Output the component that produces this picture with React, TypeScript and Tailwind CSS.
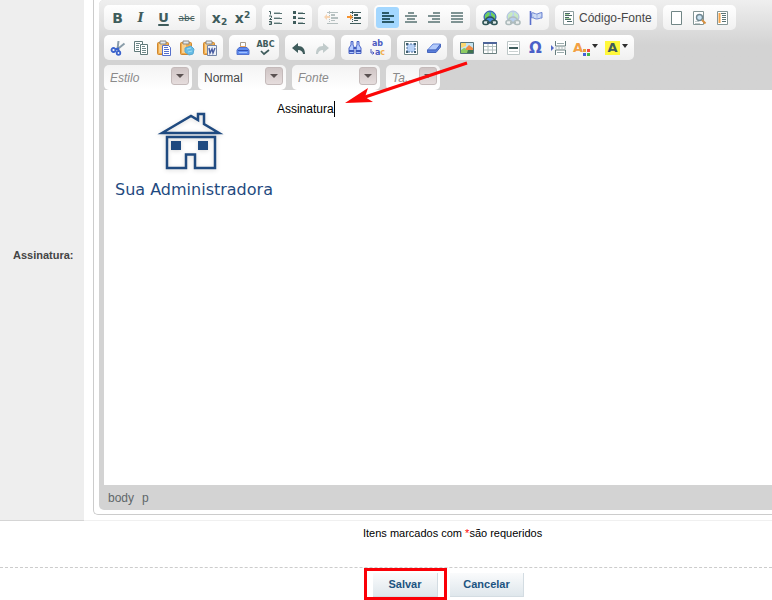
import type { ReactNode } from 'react';

const INK = '#3f5c5c';

function Svg({ children }: { children: ReactNode }) {
  return (
    <svg width="16" height="16" viewBox="0 0 16 16" fill="none" aria-hidden="true">
      {children}
    </svg>
  );
}

function Letter({ children, className }: { children: ReactNode; className: string }) {
  return <span className={`font-['DejaVu_Sans',sans-serif] leading-4 ${className}`}>{children}</span>;
}

// Horizontal strokes given as [x, y, width]
function Lines({ rows, color = INK }: { rows: number[][]; color?: string }) {
  return (
    <g fill={color} shapeRendering="crispEdges">
      {rows.map(([x, y, w]) => (
        <rect key={`${x}-${y}`} x={x} y={y} width={w} height="1" />
      ))}
    </g>
  );
}

function NumberedIcon() {
  return (
    <Svg>
      <path d="M1 1.500h1.500V4.500M1 6h2.500v1.500L1.500 9.500H4M1 11.500h2.500v3H1M1.500 13h2" stroke={INK} />
      <Lines rows={[[6, 3, 8], [6, 8, 8], [6, 13, 8]]} color="#5a7474" />
      <Lines rows={[[6, 2, 6], [6, 7, 6], [6, 12, 6]]} color="#b5c2c2" />
    </Svg>
  );
}

function BulletedIcon() {
  return (
    <Svg>
      <path d="M2 1h3v3H2zM2 6h3v3H2zM2 11h3v3H2z" fill={INK} />
      <Lines rows={[[7, 3, 7], [7, 8, 7], [7, 13, 7]]} />
      <Lines rows={[[7, 2, 5], [7, 7, 5], [7, 12, 5]]} color="#a9b8b8" />
    </Svg>
  );
}

function IndentLines() {
  return (
    <>
      <Lines rows={[[3, 2, 11], [7, 4, 4], [7, 5, 4], [7, 7, 7], [7, 8, 7], [7, 10, 4], [3, 13, 11]]} />
      <path d="M5.500 1v14" stroke={INK} strokeDasharray="1 1" />
    </>
  );
}

function OutdentIcon() {
  return (
    <Svg>
      <g opacity="0.35">
        <IndentLines />
        <path d="M0 7l3-3v2h3v2H3v2z" fill="#f59331" />
      </g>
    </Svg>
  );
}

function IndentIcon() {
  return (
    <Svg>
      <IndentLines />
      <path d="M6 7L3 4v2H0v2h3v2z" fill="#f59331" />
    </Svg>
  );
}

function AlignLeftIcon() {
  return (
    <Svg>
      <path d="M2 2h7v2H2zM2 8h8v2H2zM2 5h12v2H2zM2 11h12v2H2z" fill="#2b5a68" />
    </Svg>
  );
}

function AlignCenterIcon() {
  return (
    <Svg>
      <path d="M5 2h6v2H5zM4 8h8v2H4zM2 5h12v2H2zM2 11h12v2H2z" fill="#7f9393" />
    </Svg>
  );
}

function AlignRightIcon() {
  return (
    <Svg>
      <path d="M7 2h7v2H7zM6 8h8v2H6zM2 5h12v2H2zM2 11h12v2H2z" fill="#7f9393" />
    </Svg>
  );
}

function JustifyIcon() {
  return (
    <Svg>
      <path d="M2 2h12v2H2zM2 5h12v2H2zM2 8h12v2H2zM2 11h12v2H2z" fill="#7f9393" />
    </Svg>
  );
}

function LinkIcon({ faded = false }: { faded?: boolean }) {
  return (
    <Svg>
      <g opacity={faded ? 0.35 : 1}>
        <circle cx="8" cy="7" r="6" fill="#4b8ae0" stroke="#2f5ba0" />
        <path d="M3 5l3-3 2 1-1 3-3 3-1 1zM9 2l4 3v4l-2-1-2-3z" fill="#6fd05a" />
        <path d="M3 11c1-3 3-4 5-4s4 1 5 4" stroke="#2f5456" strokeWidth="1.500" />
        <rect x="1" y="10.500" width="5.500" height="4" rx="2" fill="#dfe9e8" stroke="#2f5456" strokeWidth="1.600" />
        <rect x="9.500" y="10.500" width="5.500" height="4" rx="2" fill="#dfe9e8" stroke="#2f5456" strokeWidth="1.600" />
        <path d="M5 12.500h6" stroke="#2f5456" strokeWidth="1.800" />
      </g>
    </Svg>
  );
}

function FlagIcon() {
  return (
    <Svg>
      <path d="M2.500 1v14" stroke="#5a70cc" strokeWidth="1.600" />
      <path d="M3.500 3c2-1 3 1 5 1s3-1.500 5.500-1.500V8c-2.500 0-3.500 1-5.500 1s-3-2-5-1z" fill="#b7c9ed" stroke="#6f86d3" />
      <path d="M5 5h3M10 5h3M6 7h2M10 7h2" stroke="#e4ecfb" />
    </Svg>
  );
}

function SourceIcon() {
  return (
    <Svg>
      <path d="M3.500 1.500h10v13h-10z" fill="#fff" stroke="#8d9f9f" />
      <Lines rows={[[5, 3, 5], [5, 5, 7], [5, 7, 4], [5, 9, 6], [7, 11, 5]]} color="#4b6868" />
      <Lines rows={[[5, 4, 4], [5, 8, 6]]} color="#a4cf9a" />
    </Svg>
  );
}

function NewPageIcon() {
  return (
    <Svg>
      <path d="M3.500 1.500h10v13h-10z" fill="#fff" stroke="#718686" />
    </Svg>
  );
}

function PreviewIcon() {
  return (
    <Svg>
      <path d="M2.500 1.500h10v13h-10z" fill="#fff" stroke="#849696" />
      <path d="M4 11.500h4M4 13.500h5" stroke="#c1cbcb" />
      <circle cx="8.500" cy="7.500" r="3" fill="#c9e2f2" stroke="#708690" strokeWidth="1.400" />
      <path d="M11 10l3.500 3.500" stroke="#d89140" strokeWidth="2" />
    </Svg>
  );
}

function TemplatesIcon() {
  return (
    <Svg>
      <path d="M3.500 1.500h10v13h-10z" fill="#fff" stroke="#849696" />
      <path d="M5.500 3v10" stroke="#f3a34a" strokeWidth="2" />
      <Lines rows={[[7, 3, 5], [8, 5, 4], [8, 7, 4], [8, 9, 4], [8, 11, 4]]} color="#5a7474" />
    </Svg>
  );
}

function CutIcon() {
  return (
    <Svg>
      <path d="M8.500 1L7.500 9M14.500 3.500L6.500 10" stroke="#8a9da9" strokeWidth="2" />
      <path d="M5 9.500l3-1 1 3" stroke="#3b63cc" strokeWidth="2" />
      <circle cx="3.500" cy="10" r="2" stroke="#3b63cc" strokeWidth="1.800" />
      <circle cx="8.500" cy="13" r="1.800" stroke="#3b63cc" strokeWidth="1.800" />
    </Svg>
  );
}

function CopyIcon() {
  return (
    <Svg>
      <path d="M1.500 1.500h8v10h-8z" fill="#fff" stroke="#617a7a" />
      <Lines rows={[[3, 3, 4], [3, 5, 3], [3, 7, 3], [3, 9, 3]]} color="#6f8989" />
      <path d="M7.500 4.500h7v10h-7z" fill="#fff" stroke="#617a7a" />
      <Lines rows={[[9, 6, 3], [9, 8, 4], [9, 10, 4], [9, 12, 4]]} color="#6f8989" />
    </Svg>
  );
}

function Clipboard() {
  return (
    <>
      <rect x="1.500" y="2.500" width="11" height="12" rx="1" fill="#efac4d" stroke="#cf872f" />
      <path d="M3 4h4v9H3z" fill="#fad08c" />
      <path d="M4 1h6v3H4z" fill="#e3e9ef" stroke="#8e8a82" />
    </>
  );
}

function PasteIcon() {
  return (
    <Svg>
      <Clipboard />
      <path d="M6.500 5.500h6l2 2v8h-8z" fill="#fff" stroke="#5670cc" />
      <Lines rows={[[8, 7, 4], [8, 9, 5], [8, 11, 5], [8, 13, 5]]} color="#5670cc" />
    </Svg>
  );
}

function PasteTextIcon() {
  return (
    <Svg>
      <Clipboard />
      <path d="M6 8l6-2 3 3-1 5-4 1-4-3z" fill="#66bce6" stroke="#5aaad2" />
      <path d="M8 9l4-1M9 12l4-1" stroke="#a4def2" />
    </Svg>
  );
}

function PasteWordIcon() {
  return (
    <Svg>
      <Clipboard />
      <path d="M5.500 5.500h9v10h-9z" fill="#eef2f8" stroke="#7385a6" />
      <path d="M7 8l1 5 2-4 1 4 2-5" stroke="#485ca1" strokeWidth="1.400" />
    </Svg>
  );
}

function PrintIcon() {
  return (
    <Svg>
      <path d="M5.500 2.500h5v5h-5z" fill="#fff" stroke="#a79c8c" />
      <path d="M5 6.500h6" stroke="#eaa45a" />
      <path d="M4 7.500h8l2 2.500v4.500H2V10z" fill="#5f8cf0" stroke="#5171cc" />
      <path d="M3 10.500h10" stroke="#2f4fb4" />
      <path d="M4 12.500h8" stroke="#9fc0ff" />
    </Svg>
  );
}

function SpellIcon() {
  return (
    <span className="flex flex-col items-center font-['DejaVu_Sans',sans-serif] text-[8px] font-bold leading-[9px] text-[#3f5c5c]">
      ABC
      <svg width="10" height="7" viewBox="0 0 10 7" fill="none" aria-hidden="true">
        <path d="M1 2l3 3 5-4" stroke={INK} strokeWidth="1.700" />
      </svg>
    </span>
  );
}

function UndoIcon() {
  return (
    <Svg>
      <path d="M1 8l6-5v3c5 0 7 3 7 8h-2c0-2-2-4-5-4v3z" fill={INK} />
    </Svg>
  );
}

function RedoIcon() {
  return (
    <Svg>
      <path d="M15 8L9 3v3c-5 0-7 3-7 8h2c0-2 2-4 5-4v3z" fill="#c1cbcb" />
    </Svg>
  );
}

function FindIcon() {
  return (
    <Svg>
      <path d="M4 1.500h2V5l1 2v6.500H2V8l2-3zM10 1.500h2V5l2 3v5.500H9V7l1-2z" fill="#b5cbff" stroke="#4a63c4" />
      <path d="M6.500 8h3M2 11h5M9 11h5" stroke="#3f5abb" strokeWidth="2" />
    </Svg>
  );
}

function ReplaceIcon() {
  return (
    <span className="flex flex-col items-center font-['DejaVu_Sans',sans-serif] text-[8px] font-bold leading-[9px] text-[#4d5cc2]">
      <span>ab</span>
      <span className="flex items-center">
        <svg width="5" height="7" viewBox="0 0 5 7" fill="none" aria-hidden="true">
          <path d="M1 0v4h3M2.500 2.500L4 4 2.500 5.500" stroke="#4d5cc2" />
        </svg>
        <span>
          a<span className="text-[#f2ad50]">c</span>
        </span>
      </span>
    </span>
  );
}

function SelectAllIcon() {
  return (
    <Svg>
      <path d="M1.500 1.500h13v13h-13z" fill="#fff" stroke="#6f8787" />
      <path d="M4 4h8v8H4z" fill="#b9d3f8" stroke="#4d6f99" strokeDasharray="2 1" />
      <path d="M3 3h2v2H3zM11 3h2v2h-2zM3 11h2v2H3zM11 11h2v2h-2z" fill="#415f70" />
    </Svg>
  );
}

function EraserIcon() {
  return (
    <Svg>
      <path d="M1.500 10L7 4h7.500L10 10z" fill="#b2cafb" stroke="#6a89da" />
      <path d="M1.500 10v2.500H10L14.500 7V4L10 10z" fill="#587ddb" stroke="#4666bd" />
    </Svg>
  );
}

function ImageIcon() {
  return (
    <Svg>
      <path d="M1.500 2.500h13v11h-13z" fill="#c5e4f2" stroke="#56757c" />
      <path d="M2 10l3-2 4 1 5-1v5H2z" fill="#8ccb62" />
      <path d="M2 3h5v3L2 8z" fill="#fbd870" />
      <path d="M7 8l3-3 4 3v2H7z" fill="#ee8b45" />
      <path d="M9 10h5v3H8z" fill="#3f7350" />
    </Svg>
  );
}

function TableIcon() {
  return (
    <Svg>
      <path d="M1.500 2.500h13v11h-13z" fill="#fff" stroke="#6b8080" />
      <path d="M1 3h14" stroke="#4e659a" strokeWidth="2" />
      <path d="M2 6.500h12M2 10h12M6 4v9M10.500 4v9" stroke="#b3c0c0" />
    </Svg>
  );
}

function RuleIcon() {
  return (
    <Svg>
      <path d="M2.500 1.500h12v13h-12z" fill="#fff" stroke="#bcc6c6" />
      <path d="M4 4.500h9M4 11.500h9" stroke="#cbd2d2" />
      <path d="M4 8h9" stroke={INK} strokeWidth="2" />
    </Svg>
  );
}

function PageBreakIcon() {
  return (
    <Svg>
      <path d="M0 5l3 3-3 3z" fill="#5269c8" />
      <path d="M4.500 1v5h10V1M4.500 15v-5h10v5" fill="#fff" stroke="#687f7f" />
      <path d="M6 3.500h7M6 12.500h7" stroke="#9bacac" />
      <path d="M4 8h11" stroke="#b3c0c0" strokeDasharray="2 1" />
    </Svg>
  );
}

function Caret() {
  return (
    <svg width="6" height="4" viewBox="0 0 6 4" className="mb-1" aria-hidden="true">
      <path d="M0 0h6L3 4z" fill="#303030" />
    </svg>
  );
}

function TextColorIcon() {
  return (
    <span className="flex items-center gap-[2px]">
      <span className="flex items-end">
        <Letter className="text-[13px] font-bold text-[#f3a043]">A</Letter>
        <svg width="7" height="7" viewBox="0 0 7 7" aria-hidden="true">
          <path d="M0 0h3v3H0z" fill="#e8a335" />
          <path d="M4 0h3v3H4z" fill="#ef4c42" />
          <path d="M0 4h3v3H0z" fill="#4460d8" />
          <path d="M4 4h3v3H4z" fill="#45b54b" />
        </svg>
      </span>
      <Caret />
    </span>
  );
}

function HighlightIcon() {
  return (
    <span className="flex items-center gap-[2px]">
      <span className="flex h-[14px] w-[15px] items-center justify-center bg-[#fff83a]">
        <Letter className="text-[13px] font-bold text-[#3f5c5c]">A</Letter>
      </span>
      <Caret />
    </span>
  );
}

interface Tool {
  label: string;
  icon: ReactNode;
  active?: boolean;
  wide?: boolean;
  text?: string;
}

const firstRow: Tool[][] = [
  [
    { label: 'Negrito', icon: <Letter className="text-sm font-bold text-[#3f5c5c]">B</Letter> },
    {
      label: 'Itálico',
      icon: <span className="font-['DejaVu_Serif',serif] text-[13px] font-bold italic leading-4 text-[#3f5c5c]">I</span>,
    },
    { label: 'Sublinhado', icon: <Letter className="text-[13px] font-bold text-[#3f5c5c] underline decoration-2 underline-offset-2">U</Letter> },
    { label: 'Tachado', icon: <Letter className="text-[9px] text-[#3f5c5c] line-through">abc</Letter> },
  ],
  [
    {
      label: 'Subscrito',
      icon: <Letter className="text-sm font-bold text-[#3f5c5c]">x<sub className="text-[9px]">2</sub></Letter>,
    },
    {
      label: 'Sobrescrito',
      icon: <Letter className="text-sm font-bold text-[#3f5c5c]">x<sup className="text-[9px]">2</sup></Letter>,
    },
  ],
  [
    { label: 'Lista numerada', icon: <NumberedIcon /> },
    { label: 'Lista', icon: <BulletedIcon /> },
  ],
  [
    { label: 'Diminuir recuo', icon: <OutdentIcon /> },
    { label: 'Aumentar recuo', icon: <IndentIcon /> },
  ],
  [
    { label: 'Alinhar à esquerda', icon: <AlignLeftIcon />, active: true },
    { label: 'Centralizar', icon: <AlignCenterIcon /> },
    { label: 'Alinhar à direita', icon: <AlignRightIcon /> },
    { label: 'Justificar', icon: <JustifyIcon /> },
  ],
  [
    { label: 'Inserir link', icon: <LinkIcon /> },
    { label: 'Remover link', icon: <LinkIcon faded /> },
    { label: 'Âncora', icon: <FlagIcon /> },
  ],
  [{ label: 'Código-Fonte', icon: <SourceIcon />, text: 'Código-Fonte' }],
  [
    { label: 'Novo', icon: <NewPageIcon /> },
    { label: 'Visualizar', icon: <PreviewIcon /> },
    { label: 'Modelos', icon: <TemplatesIcon /> },
  ],
];

const secondRow: Tool[][] = [
  [
    { label: 'Recortar', icon: <CutIcon /> },
    { label: 'Copiar', icon: <CopyIcon /> },
    { label: 'Colar', icon: <PasteIcon /> },
    { label: 'Colar como texto', icon: <PasteTextIcon /> },
    { label: 'Colar do Word', icon: <PasteWordIcon /> },
  ],
  [
    { label: 'Imprimir', icon: <PrintIcon /> },
    { label: 'Verificar ortografia', icon: <SpellIcon /> },
  ],
  [
    { label: 'Desfazer', icon: <UndoIcon /> },
    { label: 'Refazer', icon: <RedoIcon /> },
  ],
  [
    { label: 'Localizar', icon: <FindIcon /> },
    { label: 'Substituir', icon: <ReplaceIcon /> },
  ],
  [
    { label: 'Selecionar tudo', icon: <SelectAllIcon /> },
    { label: 'Remover formatação', icon: <EraserIcon /> },
  ],
  [
    { label: 'Imagem', icon: <ImageIcon /> },
    { label: 'Tabela', icon: <TableIcon /> },
    { label: 'Linha horizontal', icon: <RuleIcon /> },
    { label: 'Caractere especial', icon: <Letter className="text-[15px] font-bold text-[#4a5fc8]">Ω</Letter> },
    { label: 'Quebra de página', icon: <PageBreakIcon /> },
    { label: 'Cor do texto', icon: <TextColorIcon />, wide: true },
    { label: 'Cor do fundo', icon: <HighlightIcon />, wide: true },
  ],
];

function ToolRow({ groups }: { groups: Tool[][] }) {
  return (
    <div className="flex gap-[6px]">
      {groups.map((group) => (
        <div
          key={group[0].label}
          className="flex h-[25px] shrink-0 items-center rounded-[5px] bg-linear-to-b from-white to-[#f0f0f0] px-[2px]"
        >
          {group.map((tool) => (
            <button
              key={tool.label}
              type="button"
              aria-label={tool.label}
              className={`flex h-[21px] items-center justify-center rounded-[3px] whitespace-nowrap ${
                tool.text ? 'gap-[3px] px-[3px]' : tool.wide ? 'w-[31px]' : 'w-[23px]'
              } ${tool.active ? 'bg-[#a3d7ff]' : ''}`}
            >
              {tool.icon}
              {tool.text && <span className="text-xs text-[#474747]">{tool.text}</span>}
            </button>
          ))}
        </div>
      ))}
    </div>
  );
}

function Combo({ label, text, selected, small }: { label: string; text: string; selected?: boolean; small?: boolean }) {
  return (
    <div
      className={`relative h-[25px] shrink-0 rounded-[5px] bg-linear-to-b from-[#f4f4f4] to-white ${
        small ? 'w-[54px]' : 'w-[88px]'
      }`}
    >
      <select
        aria-label={label}
        className={`h-full w-full appearance-none pl-[6px] pr-[22px] text-xs outline-none ${
          selected ? 'text-[#474747]' : 'italic text-[#8a8a8a]'
        }`}
      >
        <option>{text}</option>
      </select>
      <span className="pointer-events-none absolute right-[3px] top-[2px] flex h-[18px] w-[18px] items-center justify-center rounded-[3px] border border-[#c4baba] bg-linear-to-b from-[#cfc5c5] to-[#e6dddd]">
        <svg width="8" height="4" viewBox="0 0 8 4" aria-hidden="true">
          <path d="M0 0h8L4 4z" fill="#5b5252" />
        </svg>
      </span>
    </div>
  );
}

function Logo() {
  return (
    <div className="flex flex-col items-center text-[#1f4a80]">
      <svg width="74" height="64" viewBox="0 0 74 64" fill="none" stroke="currentColor" strokeWidth="2.500" className="drop-shadow-sm" aria-hidden="true">
        <path d="M5 23L34 6l7 4V4h6v10l15 9z" />
        <path d="M10 27h48v31H38V44.500h-9V58H10z" />
        <path d="M14 31h10v9H14zM41 31h10v9H41z" fill="currentColor" stroke="none" />
      </svg>
      <span className="mt-1 font-['DejaVu_Sans',sans-serif] text-base leading-6 whitespace-nowrap">
        Sua Administradora
      </span>
    </div>
  );
}

function Arrow() {
  return (
    <svg
      width="124"
      height="44"
      viewBox="0 0 124 44"
      className="pointer-events-none absolute left-[345px] top-[61px]"
      aria-hidden="true"
    >
      <path d="M122 2L20 36" stroke="#fb0707" strokeWidth="3" />
      <path d="M0 42L23 27l-3 9 8 5z" fill="#fb0707" />
    </svg>
  );
}

export default function App() {
  return (
    <div className="relative min-h-screen overflow-hidden bg-white font-['Liberation_Sans',Arial,sans-serif]">
      <form>
        <div className="flex border-b border-[#f0f0f0]">
          <div className="-mb-px flex w-[84px] shrink-0 items-center border-b border-[#d5d5d5] bg-[#eee] pb-[10px] pl-[13px]">
            <span id="signature" className="text-[11px] font-bold leading-4 text-[#444]">
              Assinatura:
            </span>
          </div>

          <div className="min-w-0 flex-1 pb-[5px] pl-[9px]">
            <div className="overflow-hidden rounded-bl-[5px] border-b border-l border-[#ccc] pb-1 pl-[5px]">
              <div className="rounded-l-[5px] bg-[#d3d3d3] pl-[5px]">
                {/* Toolbar */}
                <div className="-ml-[5px] flex flex-col gap-[5px] rounded-tl-[5px] bg-linear-to-b from-[#efefef] to-[#d3d3d3] to-50% pl-[5px] pt-[5px]">
                  <ToolRow groups={firstRow} />
                  <ToolRow groups={secondRow} />
                  <div className="flex gap-[6px]">
                    <Combo label="Estilo" text="Estilo" />
                    <Combo label="Formato" text="Normal" selected />
                    <Combo label="Fonte" text="Fonte" />
                    <Combo label="Tamanho" text="Ta..." small />
                  </div>
                </div>

                {/* Content */}
                <div
                  role="textbox"
                  aria-multiline="true"
                  aria-labelledby="signature"
                  tabIndex={0}
                  className="flex min-h-[395px] items-start gap-1 bg-white pl-[11px] pt-[11px] outline-none"
                >
                  <div className="pt-[9px]">
                    <Logo />
                  </div>
                  <p className="flex items-center text-xs text-black">
                    Assinatura
                    <span className="h-4 w-px bg-black" />
                  </p>
                </div>

                <div className="flex h-[25px] items-center gap-2 pl-1 text-xs text-[#60676a]">
                  <span>body</span>
                  <span>p</span>
                </div>
              </div>
            </div>
          </div>
        </div>

        <p className="pb-[26px] pt-1 pl-[363px] text-[11px] leading-4 text-black">
          Itens marcados com <span className="text-[#f00]">*</span>são requeridos
        </p>

        <div className="flex items-center gap-[3px] border-t border-dashed border-[#ccc] pl-[364px]">
          <div className="flex h-8 w-[83px] items-center justify-center border-3 border-[#fb0007] pt-[2px]">
            <button
              type="submit"
              className="h-6 w-[65px] border-r border-b border-[#d3dce2] bg-linear-to-b from-[#fafbfc] to-[#dfe7ec] text-[11px] font-bold text-[#1c5481]"
            >
              Salvar
            </button>
          </div>
          <button
            type="button"
            className="mt-[2px] h-6 w-[74px] border-r border-b border-[#d3dce2] bg-linear-to-b from-[#fafbfc] to-[#dfe7ec] text-[11px] font-bold text-[#1c5481]"
          >
            Cancelar
          </button>
        </div>
      </form>
      <Arrow />
    </div>
  );
}
